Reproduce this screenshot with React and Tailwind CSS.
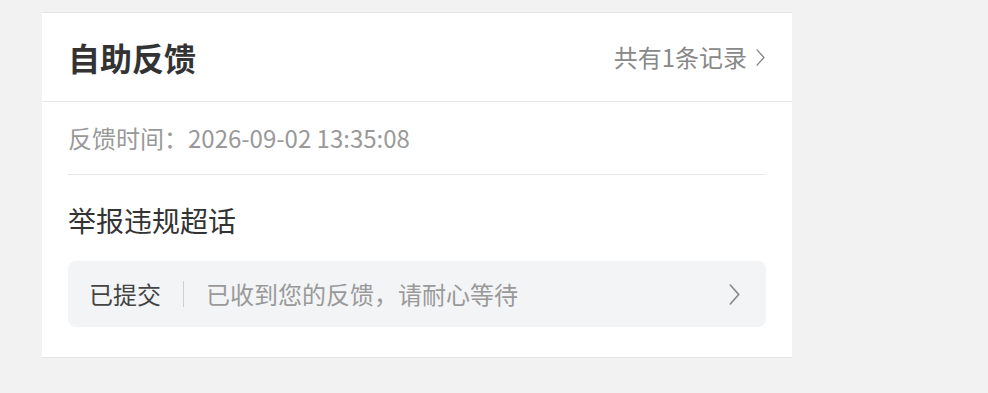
const Chevron = ({ className }) => (
  <svg viewBox="0 0 10 20" fill="none" className={className}>
    <path d="M1 1 L9 10 L1 19" stroke="currentColor" strokeWidth="1.6" strokeLinecap="round" strokeLinejoin="round" />
  </svg>
);

const App = () => {
  return (
    <div
      className="min-h-screen w-full bg-[#f2f2f2] pt-[12px]"
      style={{ fontFamily: '"Noto Sans CJK SC", "Noto Sans", sans-serif' }}
    >
      <div className="ml-[42px] w-[750px] bg-white border-t border-b border-[#e6e6e6]">
        {/* 头部 */}
        <div className="h-[89px] px-[26px] flex items-center justify-between border-b border-[#e8e8e8]">
          <h1 className="text-[32px] leading-none font-bold text-[#333]">自助反馈</h1>
          <div className="flex items-center gap-[9px] pr-[1px] text-[24px] leading-none text-[#888]">
            <span>共有1条记录</span>
            <Chevron className="w-[9px] h-[17px] text-[#888]" />
          </div>
        </div>

        <div className="px-[26px] pb-[30px]">
          <div className="h-[73px] flex items-center border-b border-[#e8e8e8] text-[24px] text-[#999]">
            反馈时间：2026-09-02 13:35:08
          </div>

          <div className="pt-[25px] pb-[21px] text-[28px] leading-[40px] text-[#333]">举报违规超话</div>

          <div className="h-[66px] rounded-[8px] bg-[#f3f4f6] pl-[21px] pr-[26px] flex items-center">
            <span className="text-[24px] text-[#444]">已提交</span>
            <span className="mx-[22px] w-px h-[26px] bg-[#cfcfcf]"></span>
            <span className="flex-1 text-[24px] text-[#999]">已收到您的反馈，请耐心等待</span>
            <Chevron className="w-[11px] h-[21px] text-[#888]" />
          </div>
        </div>
      </div>
    </div>
  );
};

export default App;
